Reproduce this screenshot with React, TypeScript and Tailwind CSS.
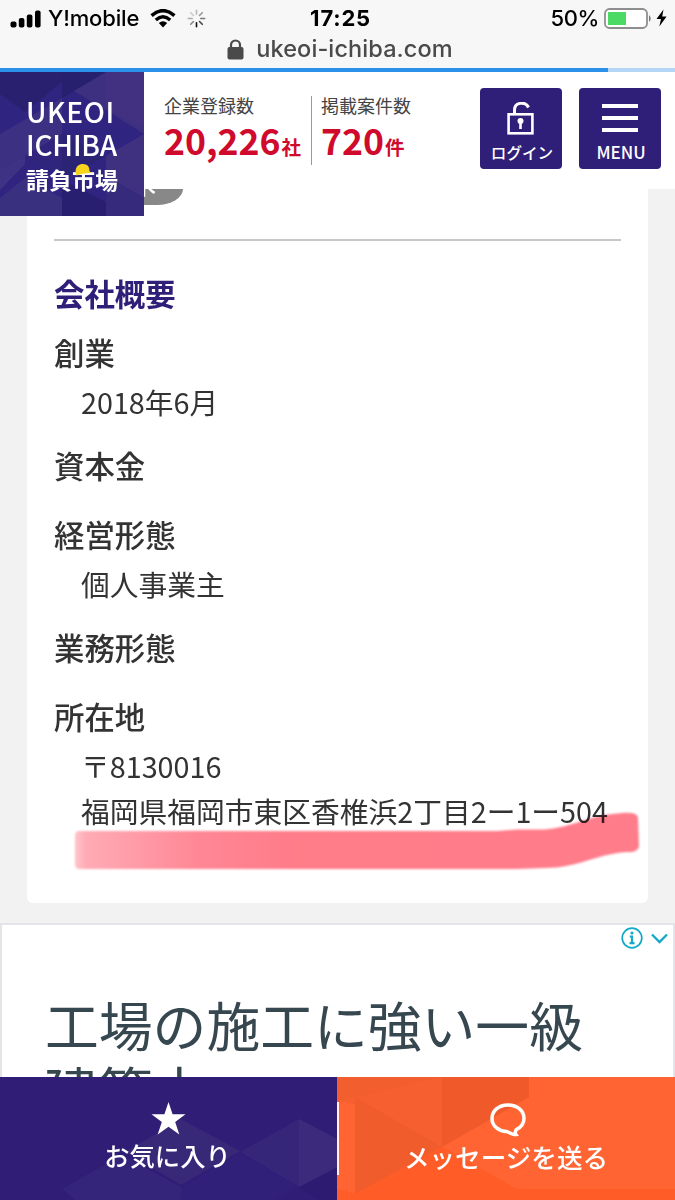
import type { ReactNode } from "react";

const PROFILE: { label: string; lines: string[] }[] = [
  { label: "創業", lines: ["2018年6月"] },
  { label: "資本金", lines: [] },
  { label: "経営形態", lines: ["個人事業主"] },
  { label: "業務形態", lines: [] },
  { label: "所在地", lines: ["〒8130016", "福岡県福岡市東区香椎浜2丁目2ー1ー504"] },
];

function Spinner() {
  const shades = ["#bbb", "#999", "#777", "#444", "#111", "#888", "#aaa", "#ccc"];
  return (
    <svg className="ml-[11px] size-[19px]" viewBox="-10 -10 20 20">
      {shades.map((c, i) => (
        <line
          key={i}
          x1="0"
          y1="-4.5"
          x2="0"
          y2="-8.6"
          stroke={c}
          strokeWidth="1.7"
          strokeLinecap="round"
          transform={`rotate(${i * 45})`}
        />
      ))}
    </svg>
  );
}

function StatusBar() {
  return (
    <div className="h-[72px] shrink-0 bg-[#f7f7f7] font-['Inter',sans-serif] text-black">
      <div className="grid h-[36px] grid-cols-3 items-center pr-[8px] pl-[10px]">
        <div className="flex items-center">
          <svg className="mt-px h-[18px] w-[31px]" viewBox="0 0 31 18">
            <rect x="0.5" y="11.5" width="6" height="6" rx="2" />
            <rect x="8.8" y="8" width="5.6" height="9.5" rx="2" />
            <rect x="16.8" y="4.5" width="5.6" height="13" rx="2" />
            <rect x="25" y="0.5" width="5.6" height="17" rx="2" />
          </svg>
          <span className="ml-[7px] text-[22px] font-medium tracking-[-0.15px]">Y!mobile</span>
          <svg className="ml-[11px] h-[19px] w-[26px]" viewBox="0 0 26 19">
            <path d="M1.6 6.6 Q13 -3.2 24.4 6.6" fill="none" stroke="#000" strokeWidth="3.6" />
            <path d="M5.8 11 Q13 4.6 20.2 11" fill="none" stroke="#000" strokeWidth="3.4" />
            <path d="M8.8 14 Q13 10.4 17.2 14 L13 18.4 Z" />
          </svg>
          <Spinner />
        </div>
        <div className="pl-[4px] text-center text-[22px] font-bold tracking-[0.8px]">17:25</div>
        <div className="flex items-center justify-end">
          <span className="text-[22px] font-medium tracking-[-0.4px]">50%</span>
          <svg className="ml-[5px] h-[21px] w-[49px]" viewBox="0 0 49 21">
            <rect x="1" y="1" width="42" height="19" rx="4.5" fill="#fff" stroke="#8e8e8e" strokeWidth="1.8" />
            <rect x="4" y="4" width="18" height="13" fill="#4cd964" />
            <path d="M45 7 Q48.5 10.5 45 14 Z" fill="#777" />
          </svg>
          <svg className="ml-[3px] h-[18px] w-[11px]" viewBox="0 0 11 18">
            <path d="M7.5 0.5 L0.5 10 H5 L3.3 17.5 L10.6 7.4 H6.2 Z" />
          </svg>
        </div>
      </div>
      <div className="flex h-[32px] items-center justify-center pb-[6px] pl-[5px] text-[#4a4a4a]">
        <svg className="h-[21px] w-[17px]" viewBox="0 0 17 21">
          <rect x="0.5" y="8" width="16" height="12.5" rx="2" fill="#4a4a4a" />
          <path d="M4 9 V6 a4.5 4.5 0 0 1 9 0 V9" fill="none" stroke="#4a4a4a" strokeWidth="2.2" />
        </svg>
        <span className="ml-[12px] text-[23.5px] font-medium tracking-[0.1px]">ukeoi-ichiba.com</span>
      </div>
      <div className="h-[4px] bg-[#b4d5f6]">
        <div className="h-full w-[608px] bg-[#2b90e8]" />
      </div>
    </div>
  );
}

function Logo() {
  return (
    <div className="relative z-10 h-[144px] w-[144px] shrink-0 overflow-hidden bg-[#302481] text-white">
      <svg className="absolute inset-0 h-full w-full" viewBox="0 0 144 144">
        <path d="M0 0 H62 V10 L25 40 L0 22 Z" fill="#292070" />
        <path d="M62 0 H144 V62 L106 38 L62 12 Z" fill="#3d3080" />
        <path d="M62 0 H106 L62 26 Z" fill="#26206f" />
        <path d="M106 0 H144 V58 L106 36 Z" fill="#423180" />
        <path d="M0 64 L25 48 V92 L0 118 Z" fill="#3d3284" />
        <path d="M0 62 L62 26 V62 L25 84 L0 98 Z" fill="#3b3082" />
        <path d="M25 84 L62 62 V106 Z" fill="#2f257c" />
        <path d="M62 62 L106 84 L62 108 Z" fill="#2b2475" />
        <path d="M106 84 L144 62 V126 L106 104 Z" fill="#403080" />
        <path d="M0 126 L25 106 L62 126 V144 H0 Z" fill="#3a3080" />
        <path d="M62 108 L106 130 V144 H62 Z" fill="#281f70" />
        <path d="M106 104 L144 126 V144 H106 Z" fill="#352a7c" />
      </svg>
      <div className="relative flex flex-col pt-[23px] pl-[26px]">
        <span className="h-[33px] text-[28px] leading-[33px] font-medium tracking-[0.6px]">UKEOI</span>
        <span className="h-[33px] text-[28px] leading-[33px] font-medium tracking-[-0.2px]">ICHIBA</span>
        <span className="mt-[1px] text-[23px] leading-[34px] font-bold">請負市場</span>
      </div>
      <svg className="absolute top-[91px] left-[74px] h-[13px] w-[18px]" viewBox="0 0 17 13">
        <path d="M1 9 Q1 2 7 1 Q15 0 15 8 L16.5 10 Q8 10 2 12.5 Z" fill="#f8d51c" />
      </svg>
    </div>
  );
}

function Counter({ label, value, unit }: { label: string; value: string; unit: string }) {
  return (
    <div>
      <div className="h-[24px] text-[18px] leading-[24px] text-[#444]">{label}</div>
      <div className="-mt-[1px] flex items-baseline text-[#cf0a2c]">
        <span className="text-[35.6px] leading-[48px] font-bold">{value}</span>
        <span className="ml-px text-[19.5px] leading-[24px] font-bold">{unit}</span>
      </div>
    </div>
  );
}

function HeaderButton({ label, children }: { label: ReactNode; children: ReactNode }) {
  return (
    <button className="flex h-[81px] w-[82px] flex-col items-center rounded-[4px] bg-[#301f78] text-white">
      <span className="flex h-[50px] items-end justify-center">{children}</span>
      <span className="mt-[2px] pl-[2px] text-[17px] leading-[24px] font-medium whitespace-nowrap">{label}</span>
    </button>
  );
}

function Header() {
  return (
    <header className="relative z-10 flex h-[117px] shrink-0 bg-white">
      <Logo />
      <div className="flex pt-[21px] pl-[20px]">
        <div className="w-[147px]">
          <Counter label="企業登録数" value="20,226" unit="社" />
        </div>
        <div className="mt-[3px] h-[69px] border-l border-[#999] pl-[9px]">
          <div className="-mt-[3px]">
            <Counter label="掲載案件数" value="720" unit="件" />
          </div>
        </div>
      </div>
      <div className="ml-auto flex gap-[17px] pt-[16px] pr-[14px]">
        <HeaderButton label={<span className="text-[15.6px]">ログイン</span>}>
          <svg className="mr-[2px] mb-[3px] h-[33px] w-[27px]" viewBox="0 0 27 33" fill="none" stroke="#fff" strokeWidth="2.6">
            <rect x="1.6" y="12.3" width="23.8" height="19" />
            <path d="M7.5 12 V8 C7.5 0 18.5 -1 21.5 5.5" strokeWidth="3" />
            <circle cx="13.5" cy="19" r="3" fill="#fff" stroke="none" />
            <path d="M13.5 20 V27" />
          </svg>
        </HeaderButton>
        <HeaderButton label="MENU">
          <span className="mb-[6px] flex w-[36px] flex-col gap-[8px]">
            <span className="h-[4px] bg-white" />
            <span className="h-[4px] bg-white" />
            <span className="h-[4px] bg-white" />
          </span>
        </HeaderButton>
      </div>
    </header>
  );
}

function CompanyCard() {
  return (
    <section className="relative mx-[27px] h-[714px] shrink-0 rounded-b-[6px] bg-white px-[27px] text-[#333]">
      <div className="h-[52px] border-b-2 border-[#c8c8c8]">
        <div className="ml-[60px] flex h-[16px] w-[69px] items-end justify-end overflow-hidden rounded-br-[26px_16px] bg-[#888] pr-[27px] pb-[5px] text-white">
          <span className="text-[24px] leading-[32px] font-medium">木</span>
        </div>
      </div>
      <h2 className="mt-[30px] text-[30.4px] leading-[44px] font-bold text-[#301f78]">会社概要</h2>
      <dl className="mt-[15px]">
        {PROFILE.map(({ label, lines }) => (
          <div key={label} className="mb-[19px]">
            <dt className="text-[30.4px] leading-[44px] font-medium">{label}</dt>
            <dd className="mt-[5px] min-h-[1px] pl-[27px] text-[28.75px] leading-[45px] whitespace-nowrap">
              {lines.map(line => (
                <div key={line}>{line}</div>
              ))}
            </dd>
          </div>
        ))}
      </dl>
      {/* marker stroke drawn over the address */}
      <svg className="absolute top-[611px] left-[40px] h-[80px] w-[580px] mix-blend-multiply" viewBox="0 0 580 80">
        <defs>
          <linearGradient id="ink" x1="0" x2="1">
            <stop offset="0" stopColor="#ffc4ca" />
            <stop offset="0.02" stopColor="#ffabb5" />
            <stop offset="0.22" stopColor="#ff8795" />
            <stop offset="0.4" stopColor="#ff7b89" />
            <stop offset="1" stopColor="#ff7d8b" />
          </linearGradient>
          <filter id="soft">
            <feGaussianBlur stdDeviation="1" />
          </filter>
        </defs>
        <path
          d="M12 31 H430 L450 29.5 H478 C505 27 525 15 550 13.5 Q571 11 571 18 L572 46 Q571 53 560 52 C530 54 510 68 478 68 L450 69 H12 Q8 69 8 64 V36 Q8 31 12 31 Z"
          fill="url(#ink)"
          filter="url(#soft)"
        />
      </svg>
    </section>
  );
}

function AdBanner() {
  return (
    <section className="relative mt-[20px] h-[154px] shrink-0 overflow-hidden border-2 border-b-0 border-[#e3e5e8] bg-white">
      <div className="absolute top-[2px] right-[5px] flex items-center gap-[8px]">
        <svg className="size-[22px]" viewBox="0 0 22 22" fill="none" stroke="#14a9c6">
          <circle cx="11" cy="11" r="9.8" strokeWidth="1.7" />
          <circle cx="11" cy="6" r="1.6" fill="#14a9c6" stroke="none" />
          <path d="M8.8 9.5 H11 V16 M8.5 16.2 H13.5" strokeWidth="2.2" />
        </svg>
        <svg className="h-[11px] w-[17px]" viewBox="0 0 17 11" fill="none" stroke="#14a9c6" strokeWidth="2.3">
          <path d="M1 1.5 L8.5 9 L16 1.5" />
        </svg>
      </div>
      <p className="w-[560px] pt-[66px] pl-[43px] text-[53.8px] leading-[65px] whitespace-nowrap text-[#37474f]">
        工場の施工に強い一級
        <br />
        建築士
      </p>
    </section>
  );
}

function BottomBar() {
  return (
    <nav className="flex h-[123px] shrink-0 text-white">
      <button className="relative flex w-[337px] flex-col items-center bg-[#301d76] pt-[25px]">
        <svg className="absolute inset-0 h-full w-full" viewBox="0 0 337 123">
          <path d="M181 42 L240 74 L181 108 L125 75 Z" fill="#382878" />
          <path d="M299 42 L337 62 V90 L299 110 L240 75 Z" fill="#352679" />
          <path d="M299 42 L337 62 V90 L299 110 Z" fill="#3c2a7c" />
          <path d="M122 78 L181 110 V123 H75 L62 112 Z" fill="#34257b" />
          <path d="M240 76 L299 110 L275 123 H181 V110 Z" fill="#312079" />
          <path d="M299 110 L337 92 V123 H320 Z" fill="#2c1b70" />
        </svg>
        <svg className="relative h-[33px] w-[35px]" viewBox="0 0 35 33">
          <path
            d="M17.5 0 L21.6 12.2 H34.5 L24.2 19.9 L28.3 32.5 L17.5 24.8 L6.7 32.5 L10.8 19.9 L0.5 12.2 H13.4 Z"
            fill="#fff"
          />
        </svg>
        <span className="relative mt-[2px] mr-[2px] text-[25.3px] leading-[36px] font-medium">お気に入り</span>
      </button>
      <button className="relative flex w-[338px] flex-col items-center bg-[#ff6432] pt-[25px]">
        <svg className="absolute inset-0 h-full w-full" viewBox="0 0 338 123">
          <path d="M0 0 H192 V20 L105 70 L48 38 L0 22 Z" fill="#f66030" />
          <path d="M105 0 H192 V20 L105 70 Z" fill="#f05a2b" />
          <path d="M18 20 L105 70 L18 117 Z" fill="#f15c2c" />
          <path d="M0 0 H105 L18 20 L0 26 Z" fill="#f25e2e" />
          <path d="M18 117 L105 70 L180 112 H338 V123 H0 V112 Z" fill="#ff5c27" />
        </svg>
        <span className="absolute top-[25px] left-0 h-[73px] w-[2px] bg-white/90" />
        <svg className="relative mt-px ml-[3px] h-[34px] w-[36px]" viewBox="0 0 36 34" fill="none">
          <path
            d="M18 2 C8.5 2 2 8 2 15.5 C2 23 8.5 28 16.5 28.6 C19 29 21.5 32 26 31.6 C25 30 25 28.5 26.3 26.6 C31 24.3 34 20 34 15.5 C34 8 27.5 2 18 2 Z"
            stroke="#fff"
            strokeWidth="3.5"
          />
        </svg>
        <span className="relative mt-[2px] text-[25.6px] leading-[36px] font-medium">メッセージを送る</span>
      </button>
    </nav>
  );
}

export default function App() {
  return (
    <div className="flex h-[1200px] w-[675px] flex-col overflow-hidden bg-[#f2f2f2] font-['Noto_Sans_CJK_JP',sans-serif]">
      <StatusBar />
      <Header />
      <CompanyCard />
      <AdBanner />
      <BottomBar />
    </div>
  );
}
